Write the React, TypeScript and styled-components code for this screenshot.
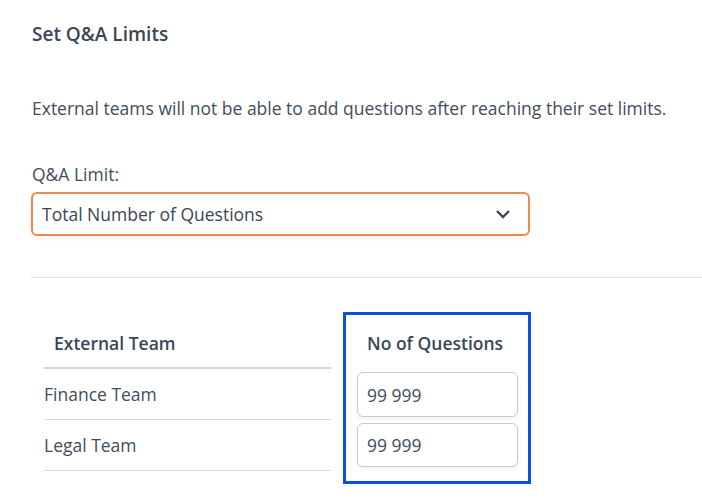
import React from 'react';
import styled, { createGlobalStyle } from 'styled-components';

const GlobalStyle = createGlobalStyle`
  html, body {
    margin: 0;
    padding: 0;
    background: #ffffff;
  }
  body {
    font-family: "Open Sans", "Noto Sans", Arial, sans-serif;
    color: #424d5c;
  }
  * {
    box-sizing: border-box;
  }
`;

interface TeamLimit {
  team: string
  limit: string
}

const teams: TeamLimit[] = [
  { team: 'Finance Team', limit: '99 999' },
  { team: 'Legal Team', limit: '99 999' },
];

export default function App() {
  return (
    <>
      <GlobalStyle />
      <Page>
        <Title>Set Q&amp;A Limits</Title>
        <Description>
          External teams will not be able to add questions after reaching their set limits.
        </Description>
        <FieldLabel>Q&amp;A Limit:</FieldLabel>
        <Select>
          <span>Total Number of Questions</span>
          <svg width="16" height="10" viewBox="0 0 16 10">
            <path d="M2 2 L8 8 L14 2" fill="none" stroke="#3b4656" strokeWidth="2.4" />
          </svg>
        </Select>
        <Divider />
        <Table>
          <TeamColumn>
            <TeamHeader>External Team</TeamHeader>
            {teams.map(t => (
              <TeamRow key={t.team}>{t.team}</TeamRow>
            ))}
          </TeamColumn>
          <LimitColumn>
            <LimitHeader>No of Questions</LimitHeader>
            {teams.map(t => (
              <LimitInput key={t.team}>{t.limit}</LimitInput>
            ))}
          </LimitColumn>
        </Table>
      </Page>
    </>
  );
}

const Page = styled('div')`
  padding: 22px 0 0 31px;
  display: flex;
  flex-direction: column;
  align-items: flex-start;
`;

const Title = styled('div')`
  font-size: 19px;
  line-height: 24px;
  font-weight: 600;
  color: #3b4656;
  padding-left: 1px;
`;

const Description = styled('div')`
  margin-top: 50px;
  font-size: 17.5px;
  line-height: 24px;
  padding-left: 1px;
`;

const FieldLabel = styled('div')`
  margin-top: 42px;
  font-size: 17.5px;
  line-height: 24px;
  padding-left: 1px;
`;

const Select = styled('div')`
  margin-top: 6px;
  width: 499px;
  height: 44px;
  border: 2px solid #ee8a4c;
  border-radius: 6px;
  box-shadow: 0 2px 5px rgba(0, 0, 0, 0.06);
  padding: 0 17px 0 9px;
  display: flex;
  align-items: center;
  justify-content: space-between;
  font-size: 17.5px;
  color: #3b4656;
`;

const Divider = styled('div')`
  margin-top: 41px;
  align-self: stretch;
  height: 1px;
  background: #e2e2e2;
`;

const Table = styled('div')`
  margin-top: 34px;
  margin-left: 13px;
  display: flex;
  gap: 12px;
  align-items: flex-start;
`;

const TeamColumn = styled('div')`
  width: 287px;
  display: flex;
  flex-direction: column;
`;

const TeamHeader = styled('div')`
  height: 57px;
  padding: 19px 0 0 10px;
  font-size: 17.5px;
  line-height: 24px;
  font-weight: 600;
  color: #3b4656;
  border-bottom: 2px solid #d3d7dd;
`;

const TeamRow = styled('div')`
  height: 51px;
  display: flex;
  align-items: center;
  font-size: 17.5px;
  border-bottom: 1px solid #d8dbe0;
`;

const LimitColumn = styled('div')`
  width: 188px;
  border: 3px solid #0b50e4;
  padding: 0 10px 14px 11px;
  display: flex;
  flex-direction: column;
  gap: 6px;
`;

const LimitHeader = styled('div')`
  height: 51px;
  padding: 16px 0 0 10px;
  font-size: 17.5px;
  line-height: 24px;
  font-weight: 600;
  color: #3b4656;
`;

const LimitInput = styled('div')`
  height: 45px;
  border: 1px solid #cacaca;
  border-radius: 6px;
  box-shadow: 0 2px 4px rgba(0, 0, 0, 0.06);
  padding-left: 9px;
  display: flex;
  align-items: center;
  font-size: 17.5px;
  color: #424d5c;

  & + & {
    height: 44px;
  }
`;
